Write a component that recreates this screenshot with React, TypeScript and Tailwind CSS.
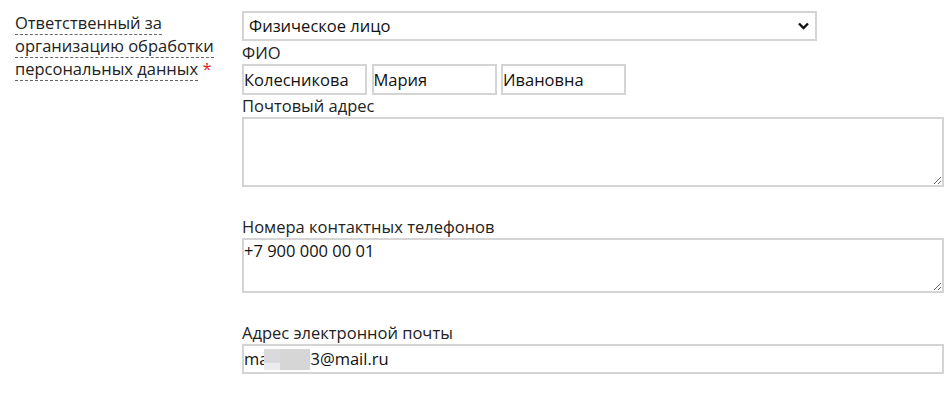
import React from "react";

export default function App() {
  const font = { fontFamily: '"Open Sans", "Noto Sans", sans-serif' };
  return (
    <div className="w-[949px] h-[393px] bg-white text-[16.5px] text-[#222] overflow-hidden" style={font}>
      <div className="flex">
        <div className="w-[242px] shrink-0 pl-[15px] pr-[18px] pt-[11px] leading-[23px]">
          <span className="border-b border-dashed border-[#666]">
            Ответственный за организацию обработки персональных данных
          </span>{" "}
          <span className="text-[#e2231a]">*</span>
        </div>
        <div className="w-[702px] pt-[11px]">
          <div className="relative w-[575px]">
            <select
              className="appearance-none block w-full h-[30px] border-2 border-[#d4d4d4] bg-white pl-[5px] pr-[30px] text-[16.5px] text-[#111] outline-none"
              style={font}
              defaultValue="Физическое лицо"
            >
              <option>Физическое лицо</option>
              <option>Юридическое лицо</option>
            </select>
            <svg
              className="absolute right-[8px] top-[11px] pointer-events-none"
              width="11"
              height="8"
              viewBox="0 0 11 8"
            >
              <path d="M1 1.5 L5.5 6 L10 1.5" fill="none" stroke="#111" strokeWidth="2.4" />
            </svg>
          </div>
          <div className="leading-[23px] h-[23px]">ФИО</div>
          <div className="flex gap-[4.5px]">
            {["Колесникова", "Мария", "Ивановна"].map((v) => (
              <input
                key={v}
                defaultValue={v}
                className="w-[125px] h-[31px] border-2 border-[#d4d4d4] px-[0px] text-[16.5px] text-[#111] outline-none"
                style={font}
              />
            ))}
          </div>
          <div className="leading-[22px] h-[22px]">Почтовый адрес</div>
          <textarea
            className="block w-[702px] h-[70px] border-2 border-[#d4d4d4] px-[0px] py-0 text-[16.5px] text-[#111] outline-none"
            style={font}
          />
          <div className="mt-[28px] leading-[23px] h-[23px]">Номера контактных телефонов</div>
          <textarea
            className="block w-[702px] h-[55px] border-2 border-[#d4d4d4] px-[0px] py-0 leading-[22px] text-[16.5px] text-[#111] outline-none"
            style={font}
            defaultValue="+7 900 000 00 01"
          />
          <div className="mt-[28px] leading-[23px] h-[23px]">Адрес электронной почты</div>
          <div className="w-[702px] h-[30px] border-2 border-[#d4d4d4] flex items-center text-[16.5px] text-[#111]">
            <span>ma</span>
            <span className="inline-flex h-[21px] ml-[-4px]">
              <span className="flex flex-col w-[16px]">
                <span className="h-[14px] bg-[#d9d9de]"></span>
                <span className="flex-1 bg-[#ececef]"></span>
              </span>
              <span className="w-[30px] bg-[#d6d6d6]"></span>
            </span>
            <span>3@mail.ru</span>
          </div>
        </div>
      </div>
    </div>
  );
}
